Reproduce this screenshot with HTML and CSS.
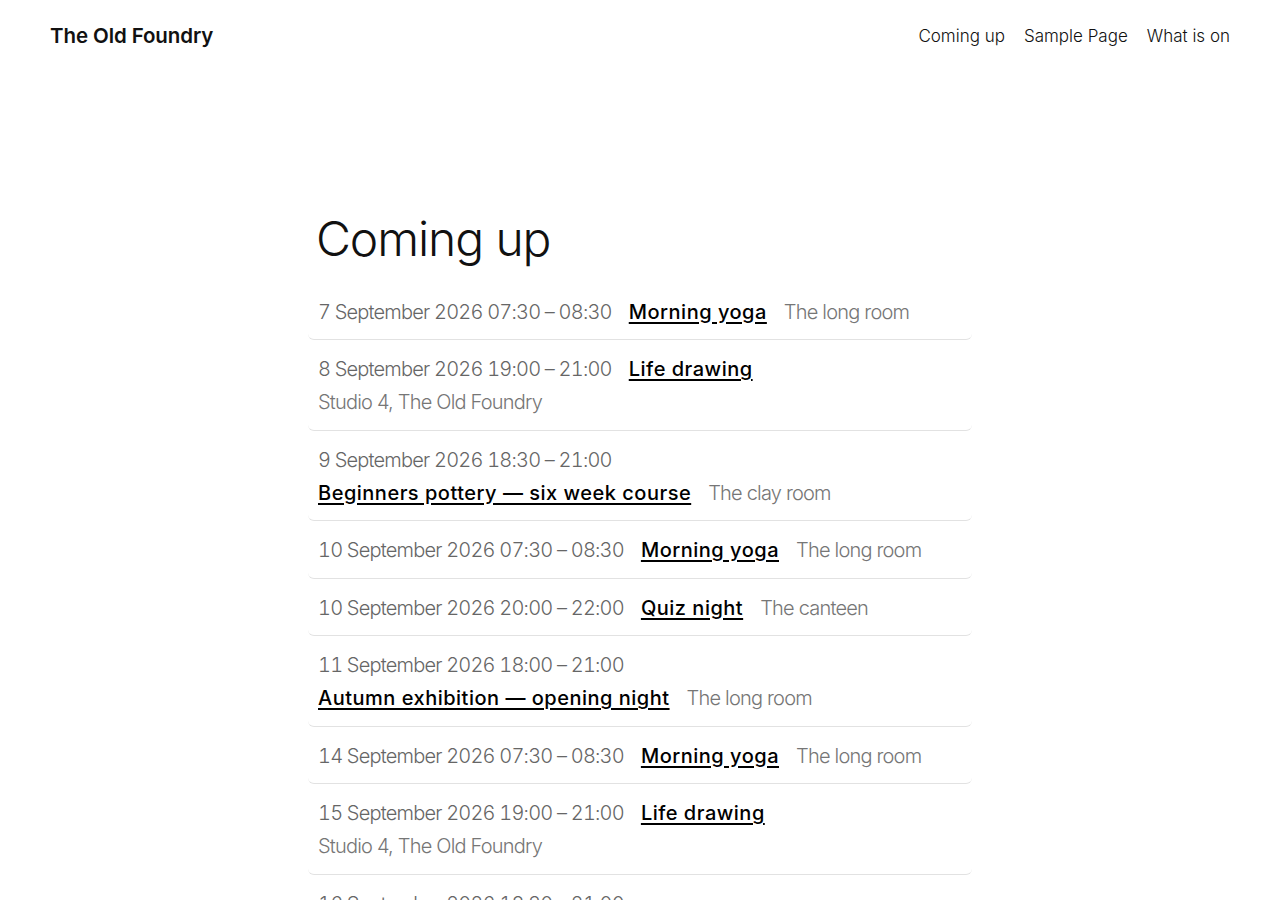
FILE: index.html
```html
<!DOCTYPE html>
<html lang="en">
<head>
<meta charset="utf-8">
<title>Coming up – The Old Foundry</title>
<link rel="stylesheet" href="styles.css">
</head>
<body>
<header class="site-header">
  <a class="site-title" href="#">The Old Foundry</a>
  <nav class="site-nav">
    <a href="#">Coming up</a>
    <a href="#">Sample Page</a>
    <a href="#">What is on</a>
  </nav>
</header>
<main class="content">
  <h1 class="page-title">Coming up</h1>
  <ul class="events">
    <li class="event"><span class="when">7 September 2026 07:30 – 08:30</span><a class="name" href="#">Morning yoga</a><span class="where">The long room</span></li>
    <li class="event"><span class="when">8 September 2026 19:00 – 21:00</span><a class="name" href="#">Life drawing</a><span class="where">Studio 4, The Old Foundry</span></li>
    <li class="event"><span class="when">9 September 2026 18:30 – 21:00</span><a class="name" href="#">Beginners pottery — six week course</a><span class="where">The clay room</span></li>
    <li class="event"><span class="when">10 September 2026 07:30 – 08:30</span><a class="name" href="#">Morning yoga</a><span class="where">The long room</span></li>
    <li class="event"><span class="when">10 September 2026 20:00 – 22:00</span><a class="name" href="#">Quiz night</a><span class="where">The canteen</span></li>
    <li class="event"><span class="when">11 September 2026 18:00 – 21:00</span><a class="name" href="#">Autumn exhibition — opening night</a><span class="where">The long room</span></li>
    <li class="event"><span class="when">14 September 2026 07:30 – 08:30</span><a class="name" href="#">Morning yoga</a><span class="where">The long room</span></li>
    <li class="event"><span class="when">15 September 2026 19:00 – 21:00</span><a class="name" href="#">Life drawing</a><span class="where">Studio 4, The Old Foundry</span></li>
    <li class="event"><span class="when">16 September 2026 18:30 – 21:00</span><a class="name" href="#">Beginners pottery — six week course</a><span class="where">The clay room</span></li>
    <li class="event"><span class="when">17 September 2026 07:30 – 08:30</span><a class="name" href="#">Morning yoga</a><span class="where">The long room</span></li>
  </ul>
</main>
</body>
</html>
```
FILE: styles.css
```css
html, body {
  margin: 0;
  padding: 0;
  background: #ffffff;
}
body {
  font-family: Inter, "Noto Sans", "Liberation Sans", sans-serif;
  color: #111111;
  font-weight: 300;
}
a {
  color: inherit;
}
.site-header {
  display: flex;
  justify-content: space-between;
  align-items: center;
  height: 71px;
  padding: 0 50px;
}
.site-title {
  font-size: 20.5px;
  font-weight: 600;
  text-decoration: none;
  letter-spacing: -0.1px;
}
.site-nav {
  display: flex;
  gap: 19px;
}
.site-nav a {
  font-size: 17px;
  text-decoration: none;
  font-weight: 300;
  letter-spacing: 0;
}
.content {
  width: 664px;
  margin: 0 auto;
  padding-top: 138px;
}
.page-title {
  font-size: 48px;
  font-weight: 300;
  line-height: 60px;
  margin: 0 0 13.5px 8px;
  letter-spacing: -1.1px;
}
.events {
  list-style: none;
  margin: 0;
  padding: 0;
}
.event {
  display: flex;
  flex-wrap: wrap;
  column-gap: 17px;
  padding: 13px 10px 10.5px;
  border-bottom: 1px solid #e2e2e2;
  border-radius: 6px;
  font-size: 20px;
  line-height: 33px;
}
.when {
  color: #666666;
  font-variant-numeric: tabular-nums;
  letter-spacing: -0.8px;
}
.name {
  font-weight: 500;
  color: #000000;
  letter-spacing: 0.5px;
  text-decoration: underline;
  text-underline-offset: 3px;
  text-decoration-thickness: 1.5px;
}
.where {
  color: #767676;
  letter-spacing: -0.8px;
}
```
